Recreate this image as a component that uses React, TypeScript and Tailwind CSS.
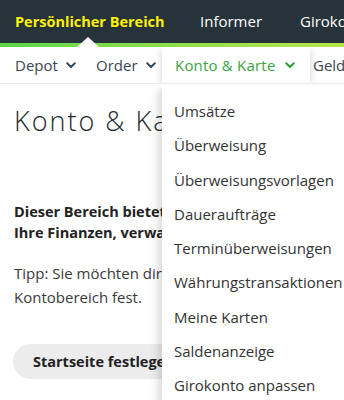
import React from "react";

const Chevron = ({ className = "" }: { className?: string }) => (
  <svg width="10" height="7" viewBox="0 0 10 7" className={className} fill="none">
    <path d="M1.2 1.3 L5 5 L8.8 1.3" stroke="currentColor" strokeWidth="2" strokeLinecap="round" strokeLinejoin="round" />
  </svg>
);

const items = [
  "Umsätze",
  "Überweisung",
  "Überweisungsvorlagen",
  "Daueraufträge",
  "Terminüberweisungen",
  "Währungstransaktionen",
  "Meine Karten",
  "Saldenanzeige",
  "Girokonto anpassen",
];

export default function App() {
  return (
    <div className="relative w-[344px] h-[400px] overflow-hidden bg-white text-[#333] font-['Open_Sans',sans-serif]">
      <header className="h-[43px] bg-[#27333a] flex items-center px-[15px] whitespace-nowrap text-[15px] overflow-hidden">
        <span className="w-[185px] shrink-0 font-bold text-[14.5px] text-[#fff200]">Persönlicher Bereich</span>
        <span className="w-[100px] shrink-0 text-white">Informer</span>
        <span className="shrink-0 text-white">Girokonto</span>
      </header>
      <div className="relative h-[4px] bg-gradient-to-r from-[#5ad64b] to-[#b8e64a]">
        <div className="absolute left-[77px] bottom-0 w-0 h-0 border-l-[11px] border-r-[11px] border-b-[10px] border-l-transparent border-r-transparent border-b-white" />
      </div>
      <nav className="h-[37px] flex items-stretch border-b border-[#eeeeee] whitespace-nowrap text-[15px] text-[#3a4650] overflow-hidden">
        <div className="w-[96px] shrink-0 flex items-center gap-[8px] pl-[15px]">
          Depot <Chevron />
        </div>
        <div className="w-[66px] shrink-0 flex items-center gap-[8px]">
          Order <Chevron />
        </div>
        <div className="relative z-10 w-[148px] shrink-0 flex items-center gap-[9px] pl-[13px] bg-white text-[#3aa53f] shadow-[0_2px_8px_rgba(0,0,0,0.18)]">
          <span className="tracking-[0.2px]">Konto &amp; Karte</span> <Chevron className="text-[#2e9d3a]" />
        </div>
        <div className="shrink-0 flex items-center pl-[3px]">Geldanlage</div>
      </nav>
      <main className="w-[162px] overflow-hidden px-[14px]">
        <h1 className="mt-[20px] text-[27px] font-light tracking-[2px] leading-[34px] text-[#1f2a30] whitespace-nowrap">Konto &amp; Karte</h1>
        <p className="mt-[63px] text-[14.5px] font-bold leading-[21px] text-[#222] whitespace-nowrap">
          Dieser Bereich bietet
          <br />
          Ihre Finanzen, verwalten
        </p>
        <p className="mt-[18px] text-[15px] leading-[24px] text-[#3a3a3a] whitespace-nowrap">
          Tipp: Sie möchten direkt
          <br />
          Kontobereich fest.
        </p>
        <button className="mt-[35px] -ml-[1px] h-[35px] rounded-full bg-[#ececec] pl-[20px] pr-[20px] text-[14.5px] font-bold text-[#222] whitespace-nowrap">
          Startseite festlegen
        </button>
      </main>
      <div className="absolute left-[162px] top-[85px] w-[200px] h-[330px] bg-white shadow-[-4px_4px_8px_rgba(0,0,0,0.15)] z-20 pt-[16px] pl-[12px]">
        {items.map((t) => (
          <div key={t} className="h-[34.3px] text-[15px] text-[#333] whitespace-nowrap leading-[20px]">
            {t}
          </div>
        ))}
      </div>
    </div>
  );
}
